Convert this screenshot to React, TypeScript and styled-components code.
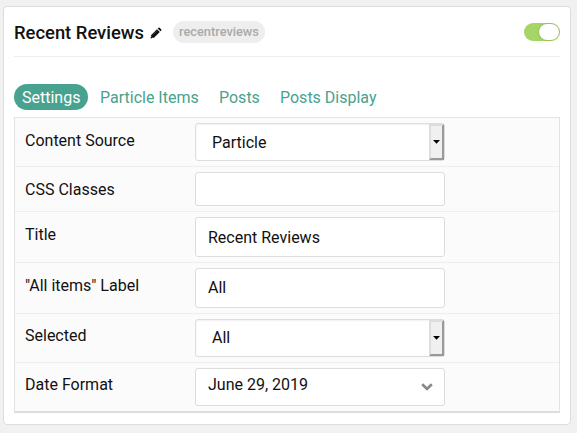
import React from 'react';
import styled, { createGlobalStyle } from 'styled-components';

const GlobalStyle = createGlobalStyle`
  * { box-sizing: border-box; }
  body {
    margin: 0;
    background: #f1f1f1;
    color: #111;
    font: 16px/24px Roboto, "Liberation Sans", sans-serif;
    overflow: hidden;
  }
`;

const Card = styled.section`
  width: 568px;
  height: 419px;
  margin: 6px 0 0 3px;
  padding: 0 10px;
  background: #fff;
  border: 1px solid #ddd;
  border-radius: 4px;
`;

const Header = styled.header`
  display: flex;
  align-items: center;
  height: 50px;
  border-bottom: 1px solid #eee;
`;

const Heading = styled.h1`
  margin: 3px 0 0;
  width: 130px;
  white-space: nowrap;
  font-size: 18.4px;
  font-weight: 500;
`;

const Pencil = styled.svg`
  width: 12px;
  height: 12px;
  margin: 2px 0 0 6px;
`;

const Badge = styled.span`
  width: 92px;
  height: 22px;
  margin-left: 11px;
  border-radius: 11px;
  background: #eee;
  color: #aaa;
  text-align: center;
  font-size: 12.8px;
  font-weight: 500;
  line-height: 22px;
`;

const Toggle = styled.span`
  display: flex;
  justify-content: flex-end;
  width: 36px;
  height: 18px;
  margin-left: auto;
  padding: 1px;
  border-radius: 9px;
  background: #a5d566;
`;

const Knob = styled.span`
  width: 20px;
  height: 16px;
  border-radius: 9px;
  background: #fff;
  box-shadow: 0 0 2px rgba(0, 0, 0, 0.3);
`;

const Tabs = styled.nav`
  display: flex;
  height: 26px;
  margin-top: 27px;
`;

const Tab = styled.a<{ $active?: boolean; $width: number }>`
  width: ${(p) => p.$width}px;
  padding: 1px 8px 0;
  border-radius: 13px;
  white-space: nowrap;
  line-height: 26px;
  background: ${(p) => (p.$active ? '#48a290' : 'transparent')};
  color: ${(p) => (p.$active ? '#fff' : '#48a290')};
  & + & { margin-left: 4px; }
`;

const Fields = styled.div`
  margin-top: 7px;
  border: 1px solid #e3e3e3;
  border-bottom: 2px solid #ddd;
  background: #fbfbfb;
`;

const Row = styled.div`
  display: flex;
  padding: 5px 10px;
  border-bottom: 1px solid #eee;
  &:last-child { border-bottom: 0; }
`;

const Label = styled.span<{ $top: number }>`
  width: 170px;
  height: 24px;
  margin-top: ${(p) => p.$top}px;
`;

const Field = styled.div<{ $height: number; $line: number; $select?: boolean }>`
  display: flex;
  justify-content: space-between;
  width: 250px;
  height: ${(p) => p.$height}px;
  padding-left: ${(p) => (p.$select ? 16 : 12)}px;
  line-height: ${(p) => p.$line}px;
  background: #fff;
  border: 1px solid #ddd;
  border-radius: 3px;
  box-shadow: ${(p) => (p.$select ? 'inset 0 1px 2px rgba(0, 0, 0, 0.06)' : 'none')};
`;

const SelectButton = styled.span`
  display: flex;
  align-items: center;
  justify-content: center;
  width: 15px;
  height: 36px;
  background: #f0f0f0;
  border: 2px solid;
  border-color: #ddd #999 #999 #ddd;
`;

const Arrow = styled.svg`
  width: 7px;
  height: 4px;
`;

const Chevron = styled.svg`
  width: 12px;
  height: 8px;
  margin: 14px 11px 0 0;
`;

type FieldData = {
  label: string;
  value: string;
  height: number;
  line: number;
  top: number;
  kind?: 'select' | 'date';
};

const fields: FieldData[] = [
  { label: 'Content Source', value: 'Particle', height: 38, line: 37, top: 6, kind: 'select' },
  { label: 'CSS Classes', value: '', height: 34, line: 32, top: 6 },
  { label: 'Title', value: 'Recent Reviews', height: 40, line: 39, top: 6 },
  { label: '"All items" Label', value: 'All', height: 40, line: 37, top: 6 },
  { label: 'Selected', value: 'All', height: 38, line: 35, top: 5, kind: 'select' },
  { label: 'Date Format', value: 'June 29, 2019', height: 38, line: 32, top: 5, kind: 'date' },
];

export default function App() {
  return (
    <>
      <GlobalStyle />
      <Card>
        <Header>
          <Heading>Recent Reviews</Heading>
          <Pencil viewBox="0 0 12 12">
            <path d="M.5 11.5 1.2 8 7 2.2 9.8 5 4 10.8ZM7.7 1.5 8.5.7Q9 .2 9.6.7L11.3 2.4Q11.8 3 11.3 3.5L10.5 4.3Z" fill="#111" />
            <path d="M1.5 9.5l1 1" stroke="#bbb" strokeWidth=".7" />
            <path d="m3 7.8 4.2-4.2" stroke="#888" strokeWidth=".4" />
          </Pencil>
          <Badge>recentreviews</Badge>
          <Toggle><Knob /></Toggle>
        </Header>
        <Tabs>
          <Tab $active $width={74}>Settings</Tab>
          <Tab $width={115}>Particle Items</Tab>
          <Tab $width={57}>Posts</Tab>
          <Tab $width={114}>Posts Display</Tab>
        </Tabs>
        <Fields>
          {fields.map((f) => (
            <Row key={f.label}>
              <Label $top={f.top}>{f.label}</Label>
              <Field $height={f.height} $line={f.line} $select={f.kind === 'select'}>
                <span>{f.value}</span>
                {f.kind === 'select' && (
                  <SelectButton>
                    <Arrow viewBox="0 0 7 4"><path d="M0 0h7L3.5 3.8Z" fill="#000" /></Arrow>
                  </SelectButton>
                )}
                {f.kind === 'date' && (
                  <Chevron viewBox="0 0 12 8">
                    <path d="m1.2 1.3 4.8 4.6 4.8-4.6" fill="none" stroke="#888" strokeWidth="2.8" />
                  </Chevron>
                )}
              </Field>
            </Row>
          ))}
        </Fields>
      </Card>
    </>
  );
}
